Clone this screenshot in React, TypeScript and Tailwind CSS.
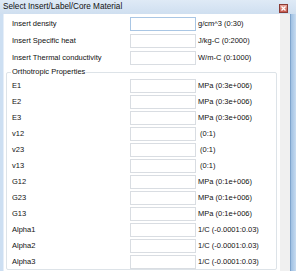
import React from 'react';

const topRows = [
  { label: 'Insert density', unit: 'g/cm^3 (0:30)', focus: true },
  { label: 'Insert Specific heat', unit: 'J/kg-C (0:2000)' },
  { label: 'Insert Thermal conductivity', unit: 'W/m-C (0:1000)' },
];

const groupRows = [
  { label: 'E1', unit: 'MPa (0:3e+006)' },
  { label: 'E2', unit: 'MPa (0:3e+006)' },
  { label: 'E3', unit: 'MPa (0:3e+006)' },
  { label: 'v12', unit: ' (0:1)' },
  { label: 'v23', unit: ' (0:1)' },
  { label: 'v13', unit: ' (0:1)' },
  { label: 'G12', unit: 'MPa (0:1e+006)' },
  { label: 'G23', unit: 'MPa (0:1e+006)' },
  { label: 'G13', unit: 'MPa (0:1e+006)' },
  { label: 'Alpha1', unit: '1/C (-0.0001:0.03)' },
  { label: 'Alpha2', unit: '1/C (-0.0001:0.03)' },
  { label: 'Alpha3', unit: '1/C (-0.0001:0.03)' },
];

type R = { label: string; unit: string; focus?: boolean };

const Cells = ({ label, unit, focus }: R) => (
  <>
    <span className="whitespace-nowrap self-center">{label}</span>
    <div
      className={`h-[14px] bg-white border ${focus ? 'border-[#a9c6e4]' : 'border-[#d9dde2]'}`}
    />
    <span className="whitespace-pre self-center pl-[2px]">{unit}</span>
  </>
);

export default function App() {
  return (
    <div
      className="w-[296px] h-[271px] overflow-hidden flex flex-col bg-[#c9dcf0] text-[#111]"
      style={{ fontFamily: '"Liberation Sans", Arial, sans-serif' }}
    >
      {/* title bar */}
      <div className="h-[14px] shrink-0 flex items-center justify-between pl-[3px] pr-[8px] bg-gradient-to-b from-[#dfeaf6] to-[#cfdff0]">
        <span className="text-[8.2px] leading-none whitespace-nowrap">Select Insert/Label/Core Material</span>
        <div className="w-[9px] h-[9px] mt-[2px] border border-[#8a3b35] bg-gradient-to-b from-[#e7a59c] to-[#c7564b] flex items-center justify-center">
          <svg width="5" height="5" viewBox="0 0 5 5">
            <path d="M0.5 0.5 L4.5 4.5 M4.5 0.5 L0.5 4.5" stroke="#fff" strokeWidth="1.3" />
          </svg>
        </div>
      </div>

      <div className="flex flex-1 min-h-0">
        {/* left frame */}
        <div className="w-[4px] shrink-0 bg-[#cddff2] border-r border-[#e6eef8]" />

        {/* client area */}
        <div className="w-[276px] shrink-0 bg-white text-[7.5px] leading-none overflow-hidden">
          <div className="grid grid-cols-[118px_66px_1fr] gap-y-[3px] pt-[3px] pl-[8px]">
            {topRows.map((r) => (
              <Cells key={r.label} {...r} />
            ))}
          </div>

          <div className="relative mt-[7px] ml-[2px] w-[271px] border border-[#dde3e8] rounded-[2px] pt-[6px] pl-[5px]">
            <span className="absolute -top-[5px] left-[4px] bg-white px-[1px] whitespace-nowrap">
              Orthotropic Properties
            </span>
            <div className="grid grid-cols-[118px_66px_1fr] gap-y-[2px]">
              {groupRows.map((r) => (
                <Cells key={r.label} {...r} />
              ))}
            </div>
          </div>
        </div>

        {/* scroll strip */}
        <div className="w-[10px] shrink-0 bg-[#f0f0f0]" />

        {/* right frame */}
        <div className="w-[6px] shrink-0 bg-gradient-to-r from-[#9ec0e3] to-[#c7dbf0] border-l border-[#7fa4cc]" />
      </div>
    </div>
  );
}
